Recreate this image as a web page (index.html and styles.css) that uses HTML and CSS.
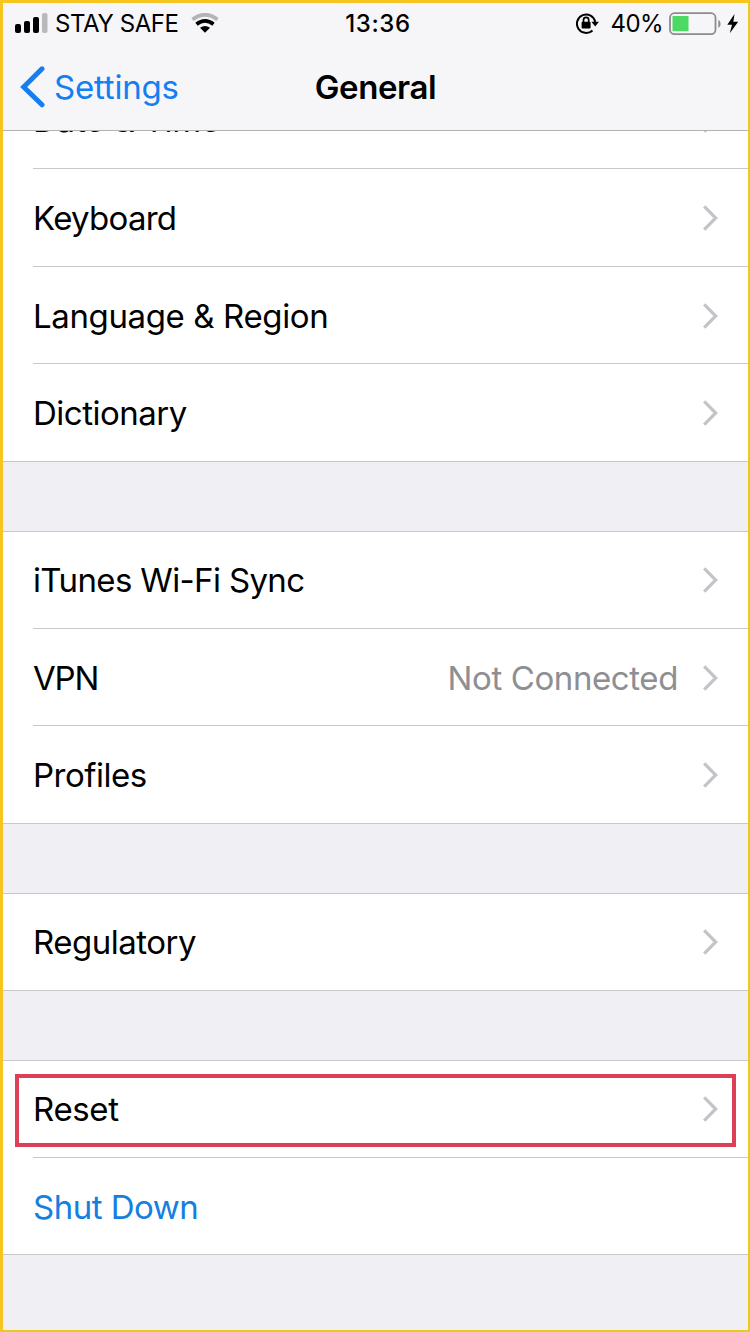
FILE: index.html
```html
<!DOCTYPE html>
<html lang="en">
<head>
<meta charset="utf-8">
<title>General</title>
<link rel="stylesheet" href="styles.css">
</head>
<body>
<svg class="defs" aria-hidden="true"><symbol id="chevron" viewBox="0 0 18 28"><path d="M2.200 2.400 13.700 14 2.200 25.600" fill="none" stroke="#c4c4c8" stroke-width="3.200"/></symbol></svg>
<div class="screen">
  <header class="header">
    <div class="status">
      <div class="status-side">
        <svg class="signal" width="34" height="22" viewBox="0 0 34 22"><rect x="0" y="11" width="6" height="9" rx="2"/><rect x="9" y="8" width="6" height="12" rx="2"/><rect x="18" y="4" width="6" height="16" rx="2"/><rect x="27" y="0" width="5.500" height="20" rx="2" fill="#b9b9bb"/></svg>
        <span class="carrier">STAY SAFE</span>
        <svg class="wifi" width="28" height="22" viewBox="0 0 28 22" fill="none" stroke="#000" stroke-width="3.800"><path d="M1.500 6.500Q14 -2.800 26.500 6.500" stroke="#b4b4b6"/><path d="M5.500 11.200Q14 4.600 22.500 11.200"/><path d="M9 14.800Q14 11 19 14.800L14 19.800Z" fill="#000" stroke="none"/></svg>
      </div>
      <span class="time">13:36</span>
      <div class="status-side status-right">
        <svg class="lock" width="23" height="22" viewBox="0 0 23 22"><path d="M16.500 17.400A9.200 9.200 0 1 1 19.200 9" fill="none" stroke="#000" stroke-width="2"/><path d="M15.400 8.800H23L19.200 13.500Z"/><rect x="5.600" y="8.700" width="9" height="6.800" rx="1"/><path d="M7.500 9.500V6.900a2.600 2.600 0 0 1 5.200 0V9.500" fill="none" stroke="#000" stroke-width="1.700"/></svg>
        <span class="percent">40%</span>
        <svg class="battery" width="54" height="24" viewBox="0 0 54 24"><rect x="1" y="1.200" width="45.500" height="21" rx="4.500" fill="none" stroke="#8b8b90" stroke-width="1.800"/><rect x="3.500" y="4" width="16" height="15.200" fill="#4cd964"/><path d="M49.300 8c3 1 3 6.800 0 7.800Z" fill="#8b8b90"/></svg>
        <svg class="bolt" width="12" height="20" viewBox="0 0 12 20"><path d="M7.500 0 .3 10.700H5L2.800 19.200 11.200 7.800H6.300Z"/></svg>
      </div>
    </div>
    <nav class="nav">
      <a class="back"><svg width="25" height="42" viewBox="0 0 25 42"><path d="M22 2.800 3.700 21 22 38.800" fill="none" stroke="#147ff0" stroke-width="5" stroke-linecap="round"/></svg><span>Settings</span></a>
      <h1 class="title">General</h1>
    </nav>
  </header>
  <main>
    <section class="group group-first">
      <div class="clip"><div class="row"><span class="l-date">Date &amp; Time</span><svg class="chevron"><use href="#chevron"/></svg></div></div>
      <div class="row tall"><span class="l-key">Keyboard</span><svg class="chevron"><use href="#chevron"/></svg></div>
      <div class="row low"><span class="l-lang">Language &amp; Region</span><svg class="chevron"><use href="#chevron"/></svg></div>
      <div class="row last tall"><span>Dictionary</span><svg class="chevron"><use href="#chevron"/></svg></div>
    </section>
    <section class="group">
      <div class="row"><span class="l-sync">iTunes Wi-Fi Sync</span><svg class="chevron"><use href="#chevron"/></svg></div>
      <div class="row low"><span class="l-vpn">VPN</span><span class="value">Not Connected</span><svg class="chevron"><use href="#chevron"/></svg></div>
      <div class="row last tall"><span>Profiles</span><svg class="chevron"><use href="#chevron"/></svg></div>
    </section>
    <section class="group">
      <div class="row last"><span>Regulatory</span><svg class="chevron"><use href="#chevron"/></svg></div>
    </section>
    <section class="group">
      <div class="row reset"><span class="l-reset">Reset</span><svg class="chevron"><use href="#chevron"/></svg></div>
      <div class="row last low"><span class="l-shut">Shut Down</span></div>
    </section>
  </main>
</div>
</body>
</html>
```
FILE: styles.css
```css
*, *::after { box-sizing: border-box; }
body { margin: 0; font-family: Inter, "Liberation Sans", sans-serif; color: #000; }
.defs { display: none; }
.screen {
  width: 750px; height: 1332px; overflow: hidden;
  border: solid #f6c51f; border-width: 3px 2px 2px 3px; border-right-color: #eacb1c; border-bottom-color: #eacb1c;
  background: #efeff4;
}
svg { flex: none; }
.header { height: 128px; background: #f6f6f8; border-bottom: 1px solid #b2b2b5; }
.status { height: 41px; display: grid; grid-template-columns: 1fr auto 1fr; align-items: center; padding: 0 9px 0 12px; }
.status-side { display: flex; align-items: center; }
.status-right { justify-content: flex-end; }
.carrier { font-size: 24px; letter-spacing: -.4px; margin: 0 12px 0 6px; }
.time { font-size: 24px; font-weight: 500; letter-spacing: .6px; padding-left: 2px; }
.percent { font-size: 24px; letter-spacing: -.6px; margin: 0 6px 0 12px; }
.bolt { margin-left: 4px; }
.nav { height: 86px; display: grid; grid-template-columns: 1fr auto 1fr; align-items: center; padding: 0 17px; }
.back { display: flex; align-items: center; gap: 9px; color: #147ff0; font-size: 33px; letter-spacing: -.2px; }
.title { margin: 0; font-size: 33px; font-weight: 600; letter-spacing: -.4px; }
.group { background: #fff; border-top: 1px solid #c8c7cc; margin-bottom: 69px; }
.group-first { border-top: 0; }
.clip { height: 38px; overflow: hidden; display: flex; flex-direction: column; justify-content: flex-end; }
.row {
  height: 97px; flex: none; display: flex; align-items: center; margin-left: 30px; padding-right: 28px;
  font-size: 33px; letter-spacing: -.5px; border-bottom: 1px solid #c8c7cc; white-space: nowrap;
}
.row.tall { height: 98px; }
.row.low { padding-top: 1px; }
.row.last { margin-left: 0; padding-left: 30px; }
.chevron { width: 18px; height: 28px; margin-left: auto; }
.value { margin-left: auto; color: #8e8e93; letter-spacing: -.4px; }
.value + .chevron { margin-left: 24px; }
.reset { position: relative; }
.reset::after { content: ""; position: absolute; left: -18px; right: 12px; top: 13px; height: 73px; border: 4px solid #dc3f56; }
.l-key { letter-spacing: -.72px; }
.l-lang { letter-spacing: -.38px; }
.l-sync { letter-spacing: -.64px; }
.l-vpn { letter-spacing: -1.200px; }
.l-reset { letter-spacing: -.35px; }
.l-date { letter-spacing: -.2px; }
.l-shut { color: #147fdf; }
```
